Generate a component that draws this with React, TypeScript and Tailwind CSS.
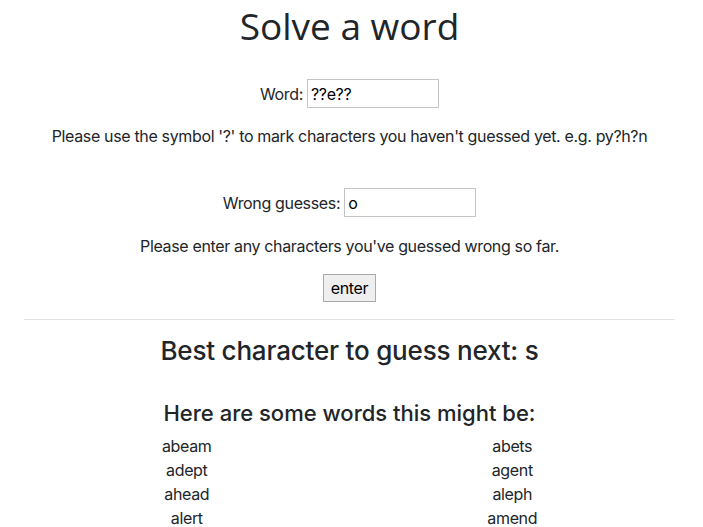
import { useState } from "react";

const words = ["abeam", "abets", "adept", "agent", "ahead", "aleph", "alert", "amend"];

export default function App() {
  const [word, setWord] = useState("??e??");
  const [wrong, setWrong] = useState("o");

  return (
    <div className="min-h-screen bg-white text-[#212529] font-['Inter',sans-serif] text-[16px]">
      <div className="ml-6 mr-[28px] text-center">
        <h1 className="pt-[2px] font-['Open_Sans',sans-serif] text-[37px] leading-[48px] text-[#212529]">Solve a word</h1>
        <div className="mt-[29px] flex items-center justify-center gap-[4px] tracking-[-0.35px]">
          <label>Word:</label>
          <input value={word} onChange={(e) => setWord(e.target.value)} className="h-[29px] w-[132px] border border-[#c4c4c4] px-[3px] text-[16px] text-black outline-none" />
        </div>
        <p className="mt-[18px] leading-[20px] tracking-[-0.35px]">Please use the symbol '?' to mark characters you haven't guessed yet. e.g. py?h?n</p>
        <div className="mt-[42px] flex items-center justify-center gap-[4px] tracking-[-0.35px]">
          <label>Wrong guesses:</label>
          <input value={wrong} onChange={(e) => setWrong(e.target.value)} className="h-[29px] w-[132px] border border-[#c4c4c4] px-[3px] text-[16px] text-black outline-none" />
        </div>
        <p className="mt-[19px] leading-[20px] tracking-[-0.35px]">Please enter any characters you've guessed wrong so far.</p>
        <button type="button" className="mt-[18px] h-[28px] w-[53px] border border-[#a9a9a9] bg-[#efefef] text-[16px] tracking-[-0.35px] text-black">enter</button>
        <hr className="mt-[17px] border-t border-[#e2e2e2]" />
        <h2 className="mt-[15px] text-[26px] font-medium leading-[32px] tracking-[-0.2px]">Best character to guess next: s</h2>
        <h3 className="mt-[32px] text-[22px] font-medium leading-[28px]">Here are some words this might be:</h3>
        <div className="mt-[7px] grid grid-cols-2 leading-[24px] tracking-[-0.35px]">
          {words.map((w) => (
            <div key={w}>{w}</div>
          ))}
        </div>
      </div>
    </div>
  );
}
